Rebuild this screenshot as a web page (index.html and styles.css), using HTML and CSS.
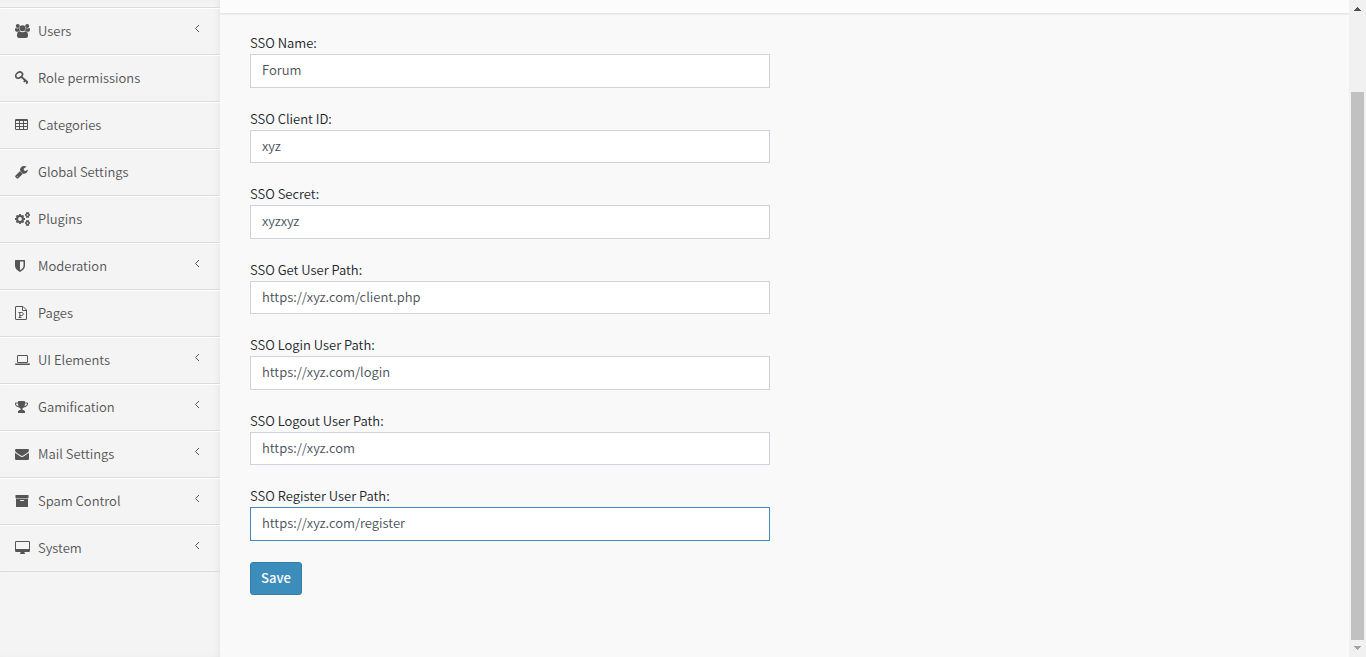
FILE: index.html
```html
<!DOCTYPE html>
<html lang="en">
<head>
<meta charset="utf-8">
<title>SSO settings</title>
<link rel="stylesheet" href="styles.css">
</head>
<body>
<nav class="sidebar">
  <ul class="menu">
    <li><a class="item" href="#"><svg class="icon" viewBox="0 0 16 14"><circle cx="2.8" cy="2" r="2"/><circle cx="12.2" cy="2" r="2"/><circle cx="7.5" cy="4.2" r="3"/><path d="M0 5.6C0 4.4.4 3.8 1.1 3.9c1 .7 2.2.7 3 .2C4.100 5.100 4.500 6 5.100 6.700 4.200 6.700 3.300 7 2.700 7.700H1.500C.6 7.700 0 7 0 5.600zM15 5.600c0-1.200-.4-1.800-1.100-1.700-1 .7-2.200.7-3 .2 0 1-.4 1.900-1 2.600.9 0 1.800.3 2.400 1h1.200c.9 0 1.500-.7 1.500-2.100zM2 11.800c0-2.700.6-4.600 2.600-4.600 1.700 1.400 4.100 1.400 5.800 0 2 0 2.600 1.900 2.600 4.600 0 1.400-.9 2.200-2.200 2.200H4.200C2.900 14 2 13.200 2 11.800z"/></svg><span class="text">Users</span><svg class="chevron" viewBox="0 0 6 10"><path d="M5 2 1.500 5.500 5 9"/></svg></a></li>
    <li><a class="item" href="#"><svg class="icon" viewBox="0 0 16 14"><ellipse class="line" cx="4.100" cy="4.100" rx="3.600" ry="2.700" transform="rotate(-35 4.100 4.100)" stroke-width="1.700"/><path class="line" stroke-width="1.800" d="m6.200 5.800 6.400 5.400M8.800 11l1.700-1.900M11.200 12.700l1.500-1.700"/></svg><span class="text">Role permissions</span></a></li>
    <li><a class="item" href="#"><svg class="icon" viewBox="0 0 16 14"><path fill-rule="evenodd" d="M1.200 1h10.600Q13 1 13 2.200v8.600q0 1.200-1.200 1.200H1.200Q0 12 0 10.800V2.200Q0 1 1.200 1zM1 3v2h3V3zm4 0v2h3V3zm4 0v2h3V3zM1 6v2h3V6zm4 0v2h3V6zm4 0v2h3V6zM1 9v2h3V9zm4 0v2h3V9zm4 0v2h3V9z"/></svg><span class="text">Categories</span></a></li>
    <li><a class="item" href="#"><svg class="icon" viewBox="0 0 16 14"><path fill-rule="evenodd" d="M8.200 8.500 3.300 13.300q-.8.700-1.600 0L.6 12.200q-.8-.8 0-1.600L5.400 5.800Q6.100 7.700 8.200 8.500zM12.900 5.100C12.600 7.200 11 8.800 9 8.800S5 7.200 5 5s1.700-4 4-4c.8 0 1.600.2 2.200.6.300.2.300.4 0 .5L8.800 3.500v1.700l1.700.9 2.100-1.300c.3-.1.400 0 .3.300zM2.200 11.200a.5.500 0 1 0 .1 1 .5.500 0 0 0-.1-1z"/></svg><span class="text">Global Settings</span></a></li>
    <li><a class="item" href="#"><svg class="icon" viewBox="0 0 16 14"><circle class="line" cx="5" cy="7" r="2.900" stroke-width="2"/><path class="line" stroke-width="1.800" d="M5 2v1.600M5 10.400V12M0 7h1.600M8.400 7H10M1.500 3.500l1.100 1.100M7.400 9.400l1.100 1.100M1.500 10.500l1.100-1.100M7.400 4.600l1.100-1.100"/><g class="line" stroke-width="1.300"><circle cx="12.500" cy="3" r="1.500"/><circle cx="12.500" cy="11" r="1.500"/><path d="m11.600.2.400 1.200M13.500.2 13 1.400M10 3h1M14 3h1M11.500 5.700l.5-1.200M13.500 5.700 13 4.500M11.600 8.200l.4 1.200M13.500 8.200 13 9.400M10 11h1M14 11h1M11.500 13.800l.5-1.200M13.500 13.800l-.5-1.200"/></g></svg><span class="text">Plugins</span></a></li>
    <li><a class="item" href="#"><svg class="icon" viewBox="0 0 16 14"><path fill-rule="evenodd" d="M.5 1h9q.5 0 .5.500V7c0 2.500-2.400 4.600-5 6-2.600-1.400-5-3.500-5-6V1.500Q0 1 .5 1zM5 2.500v8.800C7.300 9.800 8.500 8.500 8.500 7V2.500z"/></svg><span class="text">Moderation</span><svg class="chevron" viewBox="0 0 6 10"><path d="M5 2 1.500 5.500 5 9"/></svg></a></li>
    <li><a class="item" href="#"><svg class="icon" viewBox="0 0 16 14"><path class="line" d="M.5 1V13q0 .5.500.5h10q.5 0 .5-.5V4L8 .5H1Q.5.500.5 1zM7.500.5v4h4"/><path class="line" d="M3.500 6.500h3.200c2.200 0 2.200 3 0 3H5M4.800 6.500v5M3.500 11.500h3"/></svg><span class="text">Pages</span></a></li>
    <li><a class="item" href="#"><svg class="icon" viewBox="0 0 16 14"><path fill-rule="evenodd" d="M3.200 2h8.600Q13 2 13 3.200v5.600q0 1.200-1.200 1.200H3.200Q2 10 2 8.800V3.200Q2 2 3.200 2zM3 3v6h9V3zM0 10.500h15v.7q0 .8-1.200.8H1.200Q0 12 0 11.200z"/></svg><span class="text">UI Elements</span><svg class="chevron" viewBox="0 0 6 10"><path d="M5 2 1.500 5.500 5 9"/></svg></a></li>
    <li><a class="item" href="#"><svg class="icon" viewBox="0 0 16 14"><path fill-rule="evenodd" d="M3 2c0-.6.400-1 1-1h5c.6 0 1 .4 1 1v.5h2.400q.6 0 .6.600v1c0 1.700-2 3.200-4.100 3.300L7.500 8.600V10c1.300 0 2.500.6 2.500 1.600V13H3v-1.400C3 10.600 4.200 10 5.500 10V8.600L4.100 7.400C2 7.300 0 5.800 0 4.100v-1q0-.6.600-.6H3zM1 3.500v.6c0 .8 1 1.900 2.500 2.200Q3 5 3 3.500zm9 0q0 1.500-.5 2.800C11 6 12 4.900 12 4.100v-.6z"/></svg><span class="text">Gamification</span><svg class="chevron" viewBox="0 0 6 10"><path d="M5 2 1.500 5.500 5 9"/></svg></a></li>
    <li><a class="item" href="#"><svg class="icon" viewBox="0 0 16 14"><path d="M1.200 2h11.600Q14 2 14 3.200C14 4.300 13 5.200 12 5.900L8.600 8.300C7.300 9.200 6.700 9.200 5.400 8.300L2 5.900C1 5.200 0 4.300 0 3.300Q0 2 1.200 2zM0 5.700l4.700 3.400c1.800 1.300 2.800 1.300 4.600 0L14 5.700v6q0 1.300-1.200 1.300H1.200Q0 13 0 11.700z"/></svg><span class="text">Mail Settings</span><svg class="chevron" viewBox="0 0 6 10"><path d="M5 2 1.500 5.500 5 9"/></svg></a></li>
    <li><a class="item" href="#"><svg class="icon" viewBox="0 0 16 14"><path fill-rule="evenodd" d="M.5 1h13v3H.5zM1 4.500h12v8q0 .5-.5.500h-11Q1 13 1 12.500zM5.500 6q-.5 0-.5.500T5.500 7h3Q9 7 9 6.500T8.500 6z"/></svg><span class="text">Spam Control</span><svg class="chevron" viewBox="0 0 6 10"><path d="M5 2 1.500 5.500 5 9"/></svg></a></li>
    <li><a class="item" href="#"><svg class="icon" viewBox="0 0 16 14"><path fill-rule="evenodd" d="M1.200 0h12.600Q15 0 15 1.200v8.600q0 1.200-1.200 1.200H9.500v1l.5.500v.5H5v-.5l.5-.5v-1H1.200Q0 11 0 9.800V1.200Q0 0 1.200 0zM1 1v7h13V1z"/></svg><span class="text">System</span><svg class="chevron" viewBox="0 0 6 10"><path d="M5 2 1.500 5.500 5 9"/></svg></a></li>
  </ul>
</nav>
<main class="content">
  <div class="content-header"></div>
  <form class="form">
    <div class="field"><label for="name">SSO Name:</label><input id="name" type="text" value="Forum"></div>
    <div class="field"><label for="client">SSO Client ID:</label><input id="client" type="text" value="xyz"></div>
    <div class="field"><label for="secret">SSO Secret:</label><input id="secret" type="text" value="xyzxyz"></div>
    <div class="field"><label for="user">SSO Get User Path:</label><input id="user" type="text" value="https://xyz.com/client.php"></div>
    <div class="field"><label for="login">SSO Login User Path:</label><input id="login" type="text" value="https://xyz.com/login"></div>
    <div class="field"><label for="logout">SSO Logout User Path:</label><input id="logout" type="text" value="https://xyz.com"></div>
    <div class="field"><label for="register">SSO Register User Path:</label><input id="register" class="active" type="text" value="https://xyz.com/register"></div>
    <button class="save" type="submit">Save</button>
  </form>
</main>
<div class="scrollbar" aria-hidden="true">
  <svg class="arrow" viewBox="0 0 17 17"><path fill="#505050" d="M8 7h1v1h1v1h1v1h1v1H5v-1h1V9h1V8h1z"/></svg>
  <div class="thumb"></div>
  <svg class="arrow" viewBox="0 0 17 17"><path fill="#a3a3a3" d="M5 6h7v1h-1v1h-1v1H9v1H8V9H7V8H6V7H5z"/></svg>
</div>
</body>
</html>
```
FILE: styles.css
```css
* {
  box-sizing: border-box;
}

body {
  margin: 0;
  min-height: 100vh;
  display: grid;
  grid-template-columns: 220px 1fr 17px;
  background: #f9f9f9;
  color: #212529;
  font-family: "Noto Sans CJK JP", "Noto Sans", sans-serif;
  font-size: 13px;
  font-weight: 350;
  line-height: 20px;
}

.sidebar {
  padding-top: 7px;
  background: #f4f4f4;
  box-shadow: inset -3px 0 8px -4px rgba(0, 0, 0, 0.1);
}

.menu {
  margin: 0;
  padding: 0;
  list-style: none;
  border-top: 1px solid #dbdbdb;
}

.item {
  display: flex;
  align-items: center;
  height: 47px;
  padding: 0 20px 0 15px;
  border-top: 1px solid #fff;
  border-bottom: 1px solid #dbdbdb;
  color: #555;
  text-decoration: none;
}

.icon {
  width: 16px;
  height: 14px;
  margin: 0 7px 1px 0;
  fill: #555;
}

.text {
  padding-bottom: 2px;
}

.line {
  fill: none;
  stroke: #555;
}

.chevron {
  width: 6px;
  height: 10px;
  margin: 0 0 7px auto;
  fill: none;
  stroke: #555;
}

.content-header {
  height: 14px;
  background: #fcfcfc;
  border-bottom: 1px solid #e6e6e6;
  box-shadow: 0 1px 1px rgba(0, 0, 0, 0.04);
}

.form {
  max-width: 580px;
  padding: 20px 30px;
}

.field {
  margin-bottom: 22px;
}

.field:last-of-type {
  margin-bottom: 21px;
}

.field label {
  display: block;
  margin-bottom: 2px;
  line-height: 18px;
}

.field input {
  display: block;
  width: 100%;
  padding: 5px 11px 7px;
  border: 1px solid #ced4da;
  border-radius: 0;
  background: #fff;
  color: #495057;
  font: inherit;
  line-height: 1.5;
}

.field .active {
  border-color: #3c8dbc;
  outline: 0;
}

.save {
  display: block;
  padding: 5px 10px 7px;
  border: 1px solid #367fa9;
  border-radius: 3px;
  background: #3c8dbc;
  color: #fff;
  font: inherit;
  font-weight: 500;
  line-height: 1.5;
}

.scrollbar {
  display: flex;
  flex-direction: column;
  background: #f1f1f1;
}

.arrow {
  width: 17px;
  height: 17px;
}

.thumb {
  flex: 1;
  margin: 75px 2px 0;
  background: #c1c1c1;
}
```
